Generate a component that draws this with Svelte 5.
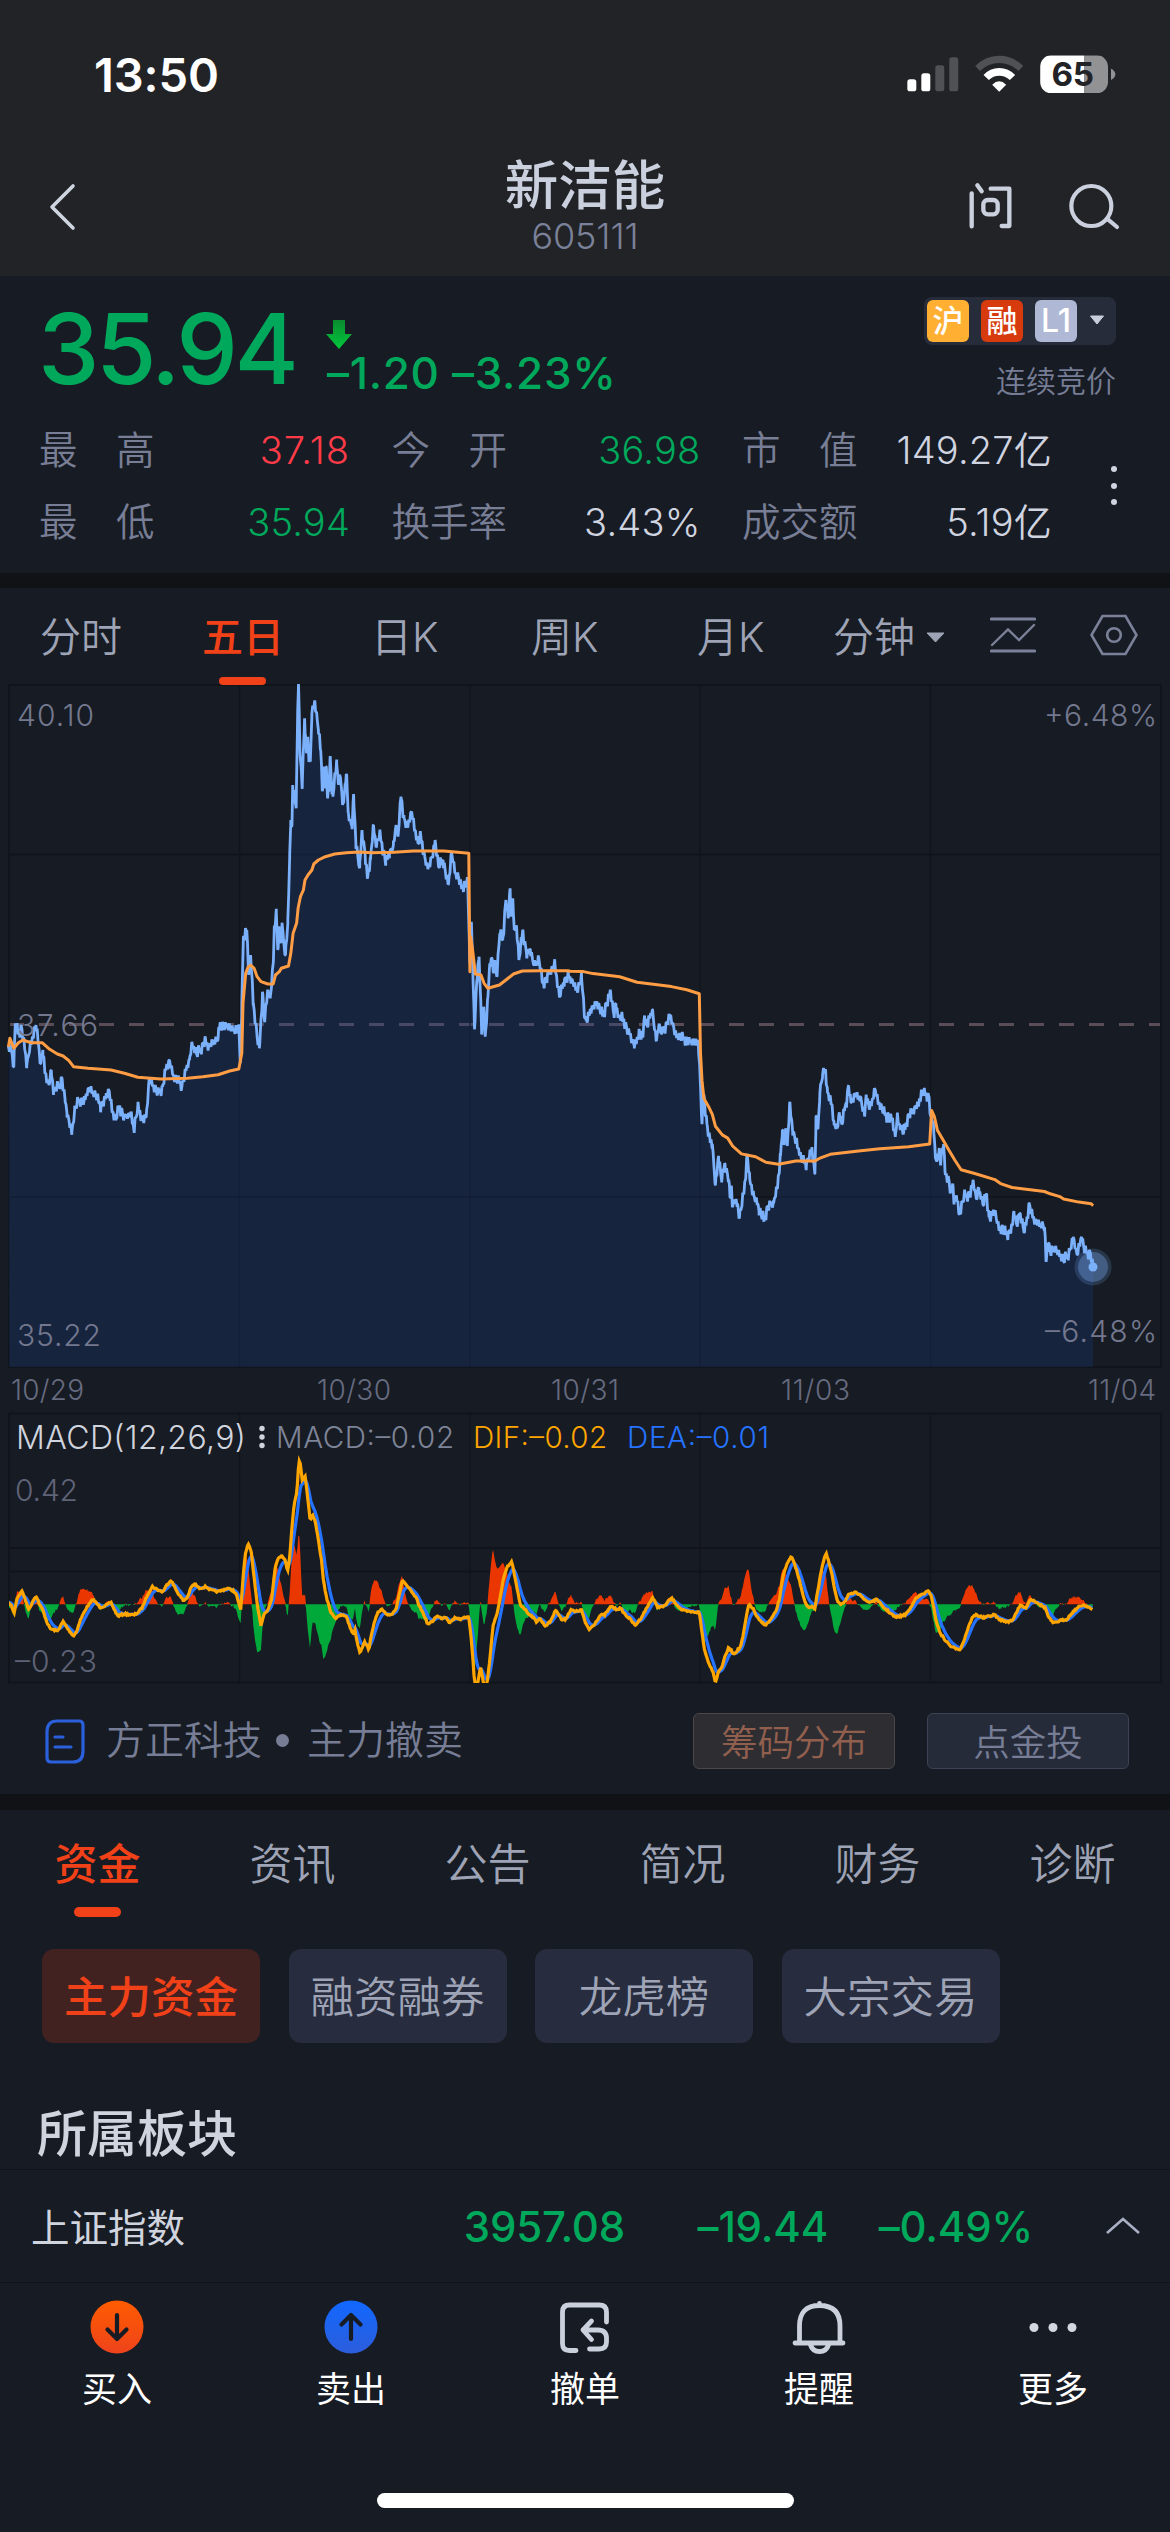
<script>
  const metrics = [
    { label: '最　高', value: '37.18', tone: 'up' },
    { label: '今　开', value: '36.98', tone: 'down' },
    { label: '市　值', value: '149.27亿', tone: '' },
    { label: '最　低', value: '35.94', tone: 'down' },
    { label: '换手率', value: '3.43%', tone: '' },
    { label: '成交额', value: '5.19亿', tone: '' },
  ];
  const sections = ['资金', '资讯', '公告', '简况', '财务', '诊断'];
  const chips = ['主力资金', '融资融券', '龙虎榜', '大宗交易'];

  // Series are stored as flat "x,y" anchor lists; each part has its own origin and vertical scale.
  const SX = 2.6133;
  function decode(text, x0, y0, sy) {
    return text.trim().split(/\s+/).map((p) => {
      const [x, y] = p.split(',').map(Number);
      return [x0 + x / SX, y0 + y / sy];
    });
  }

  const price = [
    ...decode(`22,1130 30,1140 36,1190 40,1060 48,1090 56,1070 62,1110 70,1185 80,1120 94,1065 100,1120 107,1180 112,1140 118,1210 128,1245 134,1200 140,1265 152,1250 162,1225 170,1290 175,1330 188,1385 195,1320 205,1290 220,1290 232,1255 250,1275 262,1305 275,1285 285,1262 294,1325 302,1350 312,1310 325,1340 342,1330 350,1380 360,1310 372,1345 382,1340 390,1225 400,1245 412,1270 425,1250 432,1200 443,1170 455,1225 465,1230 476,1245 485,1200 495,1170 502,1120 515,1155 535,1110 545,1130 570,1105 575,1060 585,1065 600,1070 615,1080 624,1080 628,1180 632,1000 636,800 645,780 650,915 655,855 662,1000 672,1100 678,1135 686,965 691,1050 700,960 706,985 714,880 717,770 722,725 726,840 730,780 734,820 737,758 741,810 746,855 752,760 757,560 760,450 763,465 765,345 768,400 770,360 774,415 778,120 780,42 784,250 790,340 796,145 801,250 804,200 807,265 811,275 815,130 823,95 832,180 838,240 843,360 846,290 850,340 853,290 856,385 860,350 863,258 867,360 870,380 875,310 880,280 884,340 890,325 894,380 898,400 902,340 906,315 910,430 914,450 920,470 924,372 930,520 940,595 946,480 954,550 960,625 968,570 976,465 984,530 992,492 1008,575 1018,550 1028,525 1035,465 1040,500 1048,380 1056,445 1065,470 1076,425 1084,480 1092,520 1100,500 1110,560 1118,595 1130,560 1137,510 1146,590 1158,570 1172,642 1180,545 1190,610 1198,620 1206,655 1222,630 1228,880 1232,755 1240,1078 1246,930 1252,860 1259,1092 1264,1010 1268,1100 1275,980 1280,880 1286,865 1290,910 1293,870 1298,920 1306,790 1314,810 1322,690 1328,745 1333,655 1336,740 1340,685 1344,780 1350,770 1356,870 1366,780 1376,850 1386,840 1396,885 1408,865 1418,938 1430,920 1450,880 1462,980 1475,930 1486,915 1508,960 1520,925 1529,1045`, 0, 670, 3),
    ...decode(`42,558 55,530 70,510 85,545 106,485 115,545 120,515 128,550 140,555 155,590 168,622 180,590 190,600 195,545 200,570 215,530 225,608 232,570 240,590 262,545 275,590 290,600 310,610 335,612 340,700 345,820 350,745 358,820 366,860 372,870 380,975 388,900 396,960 405,920 415,960 418,1005 422,980 425,1030 430,1010 437,1020 443,1055 455,990 463,895 470,960 480,1000 490,1020 494,1040 507,1060 518,1025 532,1020 543,970 550,900 555,835 560,870 564,830 568,875 574,768 582,840 592,865 604,905 618,920 632,880 640,945 643,800 648,830 653,740 660,695 668,683 673,740 678,750 684,770 690,820 698,830 704,790 710,820 718,780 722,765 728,722 734,765 745,745 758,750 770,800 774,745 780,770 788,770 796,730 810,775 825,795 842,805 850,852 855,800 862,825 872,840 885,795 900,780 910,770 920,738 938,750 943,800 950,820 955,905 960,910 965,880 968,915 976,870 980,940 990,960 995,990 1000,970 1003,1015 1010,1000 1018,1048 1030,1000 1045,995 1054,965 1062,1010 1068,980 1080,1025 1088,995 1095,1055 1110,1040 1120,1080 1145,1098 1156,1075 1160,1040 1168,1075 1175,1045 1188,1092 1200,1020 1212,1060 1240,1080 1244,1165 1250,1120 1255,1140 1270,1135 1290,1165 1305,1140 1315,1105 1325,1150 1337,1105 1345,1140 1360,1145 1367,1182`, 570, 800, 2.529),
  ];

  const average = [
    ...decode(`22,1130 26,1105 36,1135 48,1118 60,1110 80,1118 110,1118 130,1138 150,1152 165,1158 180,1172 192,1190 230,1195 290,1200 325,1210 360,1222 420,1227 490,1225 530,1220 570,1214 600,1203 624,1197 632,1150 635,1000 642,910 648,892 655,885 664,895 672,920 682,935 700,942 714,942 720,915 730,905 735,895 754,888 760,850 766,790 775,760 779,715 785,680 793,660 797,630 805,615 815,600 820,582 832,570 850,560 875,552 905,548 940,546 970,548 1030,547 1080,543 1160,543 1225,550 1228,905 1230,800 1236,850 1242,912 1257,915 1265,940 1275,955 1305,945 1322,930 1342,912 1365,903 1410,902 1485,902`, 0, 670, 3),
    ...decode(`0,433 35,434 60,439 130,447 175,461 265,472 305,480 338,490 341,640 345,710 350,755 362,775 372,795 380,825 398,847 412,855 425,875 448,895 485,902 512,916 545,921 590,913 640,913 655,905 680,896 760,887 810,882 885,877 940,870 945,785 952,800 960,835 975,860 990,885 1005,910 1022,935 1060,945 1110,960 1125,970 1155,980 1240,990 1255,996 1280,1003 1290,1009 1330,1017 1362,1021 1367,1026`, 570, 800, 2.529),
  ];

  const difAnchors = [
    ...decode(`22,728 30,738 37,760 44,715 58,692 66,720 76,750 85,725 94,707 104,735 112,750 122,785 131,806 150,813 165,785 178,808 192,828 200,815 210,780 225,745 243,718 262,742 275,738 290,727 300,752 308,768 325,762 350,765 360,758 372,742 385,705 398,680 410,688 425,696 436,675 447,660 458,685 470,708 480,722 490,712 500,680 510,672 520,685 538,680 550,690 570,695 595,685 610,692 618,705 629,752 634,670 640,590 648,552 656,572 664,650 672,730 682,798 690,762 700,750 710,715 720,615 728,595 736,585 744,598 752,633 757,590 763,500 769,430 776,395 781,303 784,305 790,362 797,345 804,410 810,478 817,466 825,490 832,540 840,600 846,670 855,720 864,755 877,775 890,765 905,768 914,800 922,820 928,810 934,850 941,878 952,845 964,868 970,830 978,785 988,758 998,748 1010,765 1025,762 1035,745 1042,710 1052,660 1062,675 1075,695 1088,715 1095,735 1108,765 1118,793 1130,785 1140,768 1155,775 1165,770 1175,788 1190,772 1205,778 1225,768 1231,830 1236,900 1240,968 1248,972 1256,920 1265,980 1273,968 1280,900 1288,800 1298,765 1306,720 1315,660 1325,622 1338,605 1345,650 1352,690 1360,735 1370,745 1380,760 1390,768 1402,785 1410,775 1425,798 1438,785 1453,748 1468,780 1478,778 1492,748 1502,755 1520,750 1530,790`, 0, 1360, 3),
    ...decode(`50,808 62,795 80,765 90,765 108,738 120,748 132,745 145,765 158,778 170,797 185,775 200,745 216,712 228,740 245,740 265,714 280,735 292,750 310,755 338,757 343,800 350,860 358,895 367,920 374,935 380,968 388,935 397,920 405,890 415,862 428,882 445,862 452,830 458,790 463,755 468,733 478,745 488,770 498,785 512,795 525,778 538,755 548,715 556,650 564,620 578,590 588,615 598,655 606,690 615,730 624,745 632,738 640,745 648,690 655,640 663,600 669,580 676,605 684,640 690,680 698,722 708,732 718,725 728,705 745,698 758,702 770,720 782,727 803,718 815,738 830,752 850,772 875,765 888,748 900,720 912,708 936,694 944,705 950,740 958,790 968,820 980,840 998,862 1020,868 1030,840 1040,805 1050,775 1060,764 1080,773 1110,764 1120,778 1145,786 1158,778 1165,760 1178,735 1190,745 1203,718 1218,725 1230,735 1243,745 1250,770 1263,790 1280,782 1298,778 1315,755 1328,742 1340,735 1355,740 1367,752`, 570, 1360, 3),
  ];

  // Resamples anchors at one point per minute bar, with an optional tick jitter.
  function resample(anchors, step, jitter) {
    const out = [];
    let seed = 7;
    let i = 0;
    for (let x = anchors[0][0]; x <= anchors.at(-1)[0]; x += step) {
      while (i < anchors.length - 2 && anchors[i + 1][0] < x) i++;
      const [ax, ay] = anchors[i];
      const [bx, by] = anchors[i + 1];
      const t = Math.min(1, (x - ax) / (bx - ax));
      seed = (seed * 16807) % 2147483647;
      const noise = (seed / 2147483647 - 0.5) * jitter;
      out.push([x, ay + (by - ay) * t + noise]);
    }
    return out;
  }

  const line = (pts) => pts.map(([x, y], i) => `${i ? 'L' : 'M'}${x.toFixed(1)} ${y.toFixed(1)}`).join('');

  // Short wicks go on the resampled points; anchor extremes are kept exact.
  const ticks = resample(price, 0.96, 2).map(([x, y], i) => {
    const wick = [0, 5, -6, 3, -2, 7, -4][i % 7] * (i % 3 === 0 ? 1 : 0.6);
    return [x, Math.max(686, y + wick)];
  });
  const pricePts = [...ticks, ...price].sort((a, b) => a[0] - b[0]);
  const pricePath = line(pricePts);
  const priceArea = `${pricePath}L1093 1367L9 1367Z`;
  const avgPath = line(average);

  const ZERO = 1604.3;
  const dif = resample(difAnchors, 0.96, 1.6);
  let ema = dif[0][1];
  const dea = dif.map(([x, y]) => {
    ema += (y - ema) * 0.2;
    return [x, ema];
  });
  const hist = dif.map(([x, y], i) => [x, ZERO + 2 * (y - dea[i][1])]);
  const area = (pts) => `M9 ${ZERO}${line(pts).replace('M', 'L')}L1093 ${ZERO}Z`;
  const redArea = area(hist.map(([x, y]) => [x, Math.min(y, ZERO)]));
  const greenArea = area(hist.map(([x, y]) => [x, Math.max(y, ZERO)]));
  const days = [239.5, 470, 700, 930.5];
</script>

<div class="screen">
  <header>
    <div class="status">
      <span class="clock">13:50</span>
      <svg class="sys" viewBox="80 44 628 116">
        <g fill="#fff">
          <rect x="81" y="117" width="27" height="36" rx="8" />
          <rect x="123" y="99" width="27" height="54" rx="8" />
        </g>
        <g fill="#505155">
          <rect x="165" y="75" width="27" height="78" rx="8" />
          <rect x="207" y="51" width="27" height="102" rx="8" />
          <path d="M285 77Q316 46 357 46Q398 46 429 77L415 92Q390 68 357 68Q324 68 299 92Z" />
        </g>
        <path fill="#fff" d="M310 104Q329 83 357 83Q385 83 405 104L389 119Q375 106 357 106Q339 106 326 119Z" />
        <path fill="#fff" d="M336 133Q357 112 378 133L357 154Z" />
        <clipPath id="cell"><rect x="480" y="45" width="204" height="114" rx="34" /></clipPath>
        <g clip-path="url(#cell)">
          <rect x="480" y="45" width="132" height="114" fill="#fff" />
          <rect x="612" y="45" width="72" height="114" fill="#929294" />
        </g>
        <path d="M693 85Q706 91 706 102Q706 113 693 119Z" fill="#929294" />
        <text x="578" y="137" class="pct" text-anchor="middle" textLength="128">65</text>
      </svg>
    </div>
    <div class="nav">
      <svg class="back" viewBox="0 0 32 50"><path d="M25 4L4 25L25 46" /></svg>
      <div class="title">
        <h1>新洁能</h1>
        <span>605111</span>
      </div>
      <div class="tools">
        <svg class="ask" viewBox="260 425 140 150">
          <path d="M274 462V561M291 438L304 456M331 448H387V560H364" />
          <rect x="309" y="482" width="43" height="43" rx="13" />
        </svg>
        <svg class="find" viewBox="560 420 165 155">
          <circle cx="633" cy="495" r="60" /><path d="M680 533L710 558" />
        </svg>
      </div>
    </div>
  </header>

  <section class="quote">
    <div class="headline">
      <strong>35.94</strong>
      <div class="change">
        <svg viewBox="0 0 28 36">
          <defs><linearGradient id="fall" x2="0" y2="1"><stop offset="0" stop-color="#0b8a2f" /><stop offset="1" stop-color="#00c83c" /></linearGradient></defs>
          <path d="M8 4H20V18H27L14 33L1 18H8Z" fill="url(#fall)" />
        </svg>
        <span>–1.20 –3.23%</span>
      </div>
      <div class="flags">
        <div class="badges">
          <i class="hu">沪</i><i class="rong">融</i><i class="lv">L1</i>
          <svg viewBox="0 0 16 10"><path d="M1.5 1H14.5L8 9Z" fill="#c9cedb" stroke="#c9cedb" stroke-linejoin="round" /></svg>
        </div>
        <span>连续竞价</span>
      </div>
    </div>
    <div class="figures">
      <div class="metrics">
        {#each metrics as m}
          <div class="metric"><span>{m.label}</span><b class={m.tone}>{m.value}</b></div>
        {/each}
      </div>
      <div class="kebab"><i></i><i></i><i></i></div>
    </div>
  </section>

  <div class="band"></div>

  <nav class="periods">
    <span class="p1">分时</span>
    <span class="p2 on">五日</span>
    <span class="p3">日K</span>
    <span class="p4">周K</span>
    <span class="p5">月K</span>
    <span class="p6">分钟<svg viewBox="0 0 19 11"><path d="M1 1H18L9.5 10Z" fill="#9ea4b6" stroke="#9ea4b6" stroke-linejoin="round" /></svg></span>
    <svg class="trend" viewBox="0 0 46 36">
      <path d="M1.5 2H44.500M1.500 34H44.500" stroke-width="3.200" /><path d="M2 28L18 12.500L29 23L44 8" stroke-width="2.400" />
    </svg>
    <svg class="gear" viewBox="0 0 48 42">
      <path d="M12.500 2H35.500L46.500 21L35.500 40H12.500L1.500 21Z" /><circle cx="24" cy="21" r="6.800" />
    </svg>
  </nav>

  <svg class="chart" viewBox="0 684 1170 1001">
    <clipPath id="macd"><rect x="9" y="1413" width="1152" height="270" /></clipPath>
    <path class="mid" d="M9 1024.500H1161" />
    <g class="grid">
      <path d="M9 685H1161V1367H9ZM9 854.500H1161M9 1197H1161" />
      <path d="M9 1413.500H1161M9 1548H1161M9 1571.500H1161M9 1413V1682.500H1161V1413" />
      {#each days as x}
        <path class="thin" d="M{x} 684V1367M{x} 1413V1683" />
      {/each}
    </g>
    <path d={priceArea} fill="#173f8f" fill-opacity=".25" />
    <path d={pricePath} fill="none" stroke="#7bb0fb" stroke-width="2.800" stroke-linejoin="bevel" />
    <path d={avgPath} fill="none" stroke="#ff9d45" stroke-width="3" stroke-linejoin="round" />
    <circle cx="1093" cy="1267" r="18.500" fill="#7bb0fb" fill-opacity=".18" />
    <circle cx="1093" cy="1267" r="15" fill="#7bb0fb" fill-opacity=".32" />
    <circle cx="1093" cy="1267" r="4.500" fill="#7bb0fb" />

    <g class="axis">
      <text x="17" y="726" textLength="77">40.10</text>
      <text x="17" y="1036" textLength="81">37.66</text>
      <text x="17" y="1346" textLength="84">35.22</text>
      <text x="1157" y="726" text-anchor="end" textLength="113">+6.48%</text>
      <text x="1157" y="1342" text-anchor="end" textLength="112">–6.48%</text>
      <g class="dates">
        <text x="11" y="1400" textLength="73">10/29</text>
        <text x="317" y="1400" textLength="74">10/30</text>
        <text x="551" y="1400" textLength="68">10/31</text>
        <text x="781" y="1400" textLength="69">11/03</text>
        <text x="1156" y="1400" text-anchor="end" textLength="68">11/04</text>
        <text x="15" y="1500.500" class="lvl" textLength="63">0.42</text>
        <text x="15" y="1671.500" class="lvl" textLength="82">–0.23</text>
      </g>
    </g>

    <g class="legend">
      <text x="16" y="1448.500" class="name" textLength="230">MACD(12,26,9)</text>
      <g fill="#d0d4df"><circle cx="262" cy="1428.500" r="2.700" /><circle cx="262" cy="1437" r="2.700" /><circle cx="262" cy="1445.500" r="2.700" /></g>
      <text x="276" y="1448" fill="#7e8498" textLength="178">MACD:–0.02</text>
      <text x="473" y="1448" fill="#ffa500" textLength="134">DIF:–0.02</text>
      <text x="627" y="1448" fill="#2573ff" textLength="142">DEA:–0.01</text>
    </g>
    <g clip-path="url(#macd)">
      <path d={redArea} fill="#ea3600" />
      <path d={greenArea} fill="#00a93a" />
      <path d={line(dea)} fill="none" stroke="#2573ff" stroke-width="3.200" />
      <path d={line(dif)} fill="none" stroke="#ffa500" stroke-width="3.200" />
    </g>
  </svg>

  <div class="news">
    <svg viewBox="0 0 40 46">
      <path d="M12 2H34Q38 2 38 6V32Q38 43 28 43H6Q2 43 2 39V13Q2 2 12 2Z" /><path d="M10 18H18M10 28H26" />
    </svg>
    <p>方正科技<em></em>主力撤卖</p>
    <button class="warm">筹码分布</button>
    <button>点金投</button>
  </div>

  <div class="band wide"></div>

  <nav class="sections">
    {#each sections as s, i}
      <span class:on={i === 0}>{s}</span>
    {/each}
  </nav>
  <div class="chips">
    {#each chips as c, i}
      <span class:on={i === 0}>{c}</span>
    {/each}
  </div>
  <h2>所属板块</h2>

  <div class="index">
    <span class="iname">上证指数</span>
    <span class="ival">3957.08</span>
    <span class="ichg">–19.44</span>
    <span class="ipct">–0.49%</span>
    <svg viewBox="0 0 38 20"><path d="M3 17L19 3L35 17" /></svg>
  </div>

  <footer>
    <div>
      <svg viewBox="0 0 54 54">
        <defs><linearGradient id="buy" x2="0" y2="1"><stop offset="0" stop-color="#ff5c00" /><stop offset="1" stop-color="#ee431c" /></linearGradient></defs>
        <circle cx="27" cy="27" r="26.500" fill="url(#buy)" /><path class="dark" d="M27 15V39M17.500 29.500L27 39L36.500 29.500" />
      </svg>
      <span>买入</span>
    </div>
    <div>
      <svg viewBox="0 0 54 54">
        <defs><linearGradient id="sell" x2="0" y2="1"><stop offset="0" stop-color="#1168ff" /><stop offset="1" stop-color="#2c5ddb" /></linearGradient></defs>
        <circle cx="27" cy="27" r="26.500" fill="url(#sell)" /><path class="dark" d="M27 39V15M17.500 24.500L27 15L36.500 24.500" />
      </svg>
      <span>卖出</span>
    </div>
    <div>
      <svg viewBox="0 0 54 54">
        <path class="pale" d="M18 50.500H11.500Q4.500 50.500 4.500 43.500V12Q4.500 5 11.500 5H41Q48.500 5 48.500 12V22M31.500 49H41Q48.500 49 48.500 42V38Q48.500 30 40 30H25M33.500 21L25 30L33.500 39.500" />
      </svg>
      <span>撤单</span>
    </div>
    <div>
      <svg viewBox="0 0 54 54">
        <path class="pale" d="M3 43H51M7.500 42V26Q7.500 5.500 27.500 5.500Q48 5.500 48 26V42M18.500 45Q20.500 51.500 27.500 51.500Q34.500 51.500 36.500 45M27.500 3.500V5" />
      </svg>
      <span>提醒</span>
    </div>
    <div>
      <svg viewBox="0 0 54 54"><g fill="#d3d7e2"><circle cx="8" cy="27.500" r="4.500" /><circle cx="27" cy="27.500" r="4.500" /><circle cx="46" cy="27.500" r="4.500" /></g></svg>
      <span>更多</span>
    </div>
  </footer>
  <div class="home"></div>
</div>

<style>
  :global(body) { background: #171b23; }
  .screen {
    width: 1170px; height: 2532px; overflow: hidden; background: #171b23;
    display: flex; flex-direction: column;
    font-family: Inter, 'Noto Sans CJK SC', sans-serif;
    color: #cfd4e0;
  }
  .screen > * { flex: none; }
  svg { display: block; flex: none; fill: none; }
  h1, h2, p { margin: 0; font-weight: inherit; }
  i, em { font-style: normal; }
  span, strong, b { white-space: nowrap; }

  header { height: 276px; background: #222326; }
  .status { height: 150px; display: flex; justify-content: space-between; padding: 0 54px 0 94px; box-sizing: border-box; }
  .clock { font-size: 47px; font-weight: 600; line-height: 149px; color: #fff; letter-spacing: -0.1px; }
  .sys { width: 209px; height: 38.700px; margin-top: 54.500px; }
  .pct { font: 700 100px Inter, sans-serif; fill: #222326; }
  .nav { height: 126px; display: grid; grid-template-columns: 1fr 300px 1fr; }
  .back { width: 32px; height: 50px; margin: 32px 0 0 48px; stroke: #cfd5e0; stroke-width: 3.600; stroke-linecap: round; stroke-linejoin: round; }
  .title { text-align: center; display: flex; flex-direction: column; align-items: center; }
  .title h1 { font-size: 53.500px; line-height: 60px; font-weight: 500; color: #cad0dd; margin-top: 6px; }
  .title span { font-size: 36px; line-height: 40px; font-weight: 300; color: #7a8199; letter-spacing: -0.1px; }
  .tools { display: flex; justify-content: flex-end; gap: 53px; padding: 31px 48px 0 0; stroke: #cad0dd; stroke-linecap: round; stroke-linejoin: round; }
  .ask { width: 46.700px; height: 50px; stroke-width: 13; }
  .find { width: 55px; height: 51.700px; stroke-width: 12.500; }

  .quote { height: 297px; }
  .headline { height: 136px; display: flex; padding: 0 54px 0 38px; }
  .headline strong { font-size: 98px; line-height: 146px; font-weight: 500; color: #00a85c; letter-spacing: -3.400px; width: 287px; }
  .change { padding-top: 40px; color: #00a85c; font-size: 44px; line-height: 52px; font-weight: 500; letter-spacing: 0.7px; }
  .change svg { width: 28px; height: 36px; }
  .change span { display: block; margin: -5px 0 0 2px; }
  .flags { margin-left: auto; padding-top: 21px; display: flex; flex-direction: column; align-items: flex-end; }
  .badges { height: 48px; width: 192px; border-radius: 8px; background: #272c3b; display: flex; align-items: center; gap: 12px; padding-left: 3px; box-sizing: border-box; }
  .badges i { width: 42px; height: 42px; border-radius: 6px; text-align: center; font-size: 31px; line-height: 41px; color: #fff; font-weight: 500; }
  .hu { background: #ffaf32; }
  .rong { background: #d63a0d; }
  .badges .lv { background: #afb8d4; font-size: 32px; font-weight: 500; }
  .badges svg { width: 16px; height: 10px; margin-top: -3px; }
  .flags > span { font-size: 30px; line-height: 40px; margin-top: 16px; font-weight: 350; color: #767d95; }
  .figures { display: flex; height: 150px; padding: 0 54px 0 39px; }
  .metrics { width: 1013px; display: grid; grid-template-columns: 311px 309px 310px; column-gap: 41.500px; grid-template-rows: 72px 72px; padding-top: 2px; }
  .metric { display: flex; justify-content: space-between; line-height: 72px; font-size: 38.500px; font-weight: 350; color: #777e95; }
  .metric b { font-weight: 350; color: #cfd4e0; font-size: 38px; letter-spacing: 0.200px; }
  .metric b.up { color: #ff3b49; letter-spacing: 1px; }
  .metric b.down { color: #00a85c; }
  .kebab { margin-left: auto; margin-right: -1.500px; width: 7px; display: flex; flex-direction: column; gap: 10.500px; padding-top: 54px; }
  .kebab i { width: 6px; height: 6px; border-radius: 3px; background: #cfd4e0; }

  .band { height: 15px; background: #101216; }
  .band.wide { height: 16px; }

  .periods { height: 96px; display: grid; grid-template-columns: 162px 169px 160px 166px 136px 157px 100px 1fr; padding-left: 40px; font-size: 41px; line-height: 98px; font-weight: 350; color: #9ea4b6; }
  .periods .on { color: #f04118; font-weight: 500; position: relative; }
  .periods .on::after { content: ''; position: absolute; left: 17px; bottom: 1px; width: 47px; height: 8.500px; border-radius: 4px; background: #f04118; }
  .p6 { display: flex; align-items: center; gap: 11px; }
  .p6 svg { width: 19px; height: 11px; }
  .trend { width: 46px; height: 36px; margin-top: 29px; stroke: #7a8199; stroke-linecap: round; }
  .gear { width: 48px; height: 42px; margin-top: 26px; stroke: #7a8199; stroke-width: 2.600; }

  .chart { width: 1170px; height: 1001px; }
  .mid { stroke: #5a4d57; stroke-width: 3; stroke-dasharray: 15 15; }
  .grid { stroke: #11141a; stroke-width: 2; fill: none; }
  .grid .thin { stroke-width: 1.200; }
  .axis text { font: 300 30px Inter, sans-serif; fill: #73788f; }
  .axis .dates text { font-size: 28px; fill: #666b80; }
  .axis .dates .lvl { font-size: 30px; fill: #5f6377; }
  .legend text { font: 350 29.500px Inter, sans-serif; }
  .legend .name { font-size: 32px; fill: #d0d4df; }

  .news { height: 109px; display: flex; padding: 0 41px 0 45px; align-items: flex-start; }
  .news svg { width: 40px; height: 46px; margin-top: 33.500px; stroke: #2b60dc; stroke-width: 3.200; stroke-linecap: round; stroke-linejoin: round; }
  .news p { display: flex; align-items: center; margin: 26px auto 0 21px; font-size: 39px; line-height: 58px; font-weight: 350; color: #767d95; }
  .news em { width: 13px; height: 13px; border-radius: 50%; background: #767d95; margin: 0 18px 0 14px; }
  button { width: 202px; height: 56px; margin: 28px 0 0; padding: 0 0 1px; border: 1.500px solid #3d4254; border-radius: 6px; background: #262b3a; color: #767d95; font: 350 36.500px 'Noto Sans CJK SC', sans-serif; line-height: 50px; }
  button.warm { background: #2d2d32; border-color: #4a484a; color: #915f4e; margin-right: 32px; }

  .sections { height: 139px; display: grid; grid-template-columns: repeat(6, 195px); text-align: center; font-size: 43px; line-height: 109px; font-weight: 350; color: #9ea4b6; }
  .sections .on { color: #f04118; font-weight: 500; display: flex; flex-direction: column; align-items: center; }
  .sections .on::after { content: ''; width: 47px; height: 10px; margin-top: -12px; border-radius: 5px; background: #f04118; }
  .chips { display: flex; gap: 28.500px; padding-left: 42px; }
  .chips span { width: 218px; height: 94px; border-radius: 12px; background: #272c3e; text-align: center; font-size: 43.500px; line-height: 96px; color: #9ea4b6; font-weight: 350; }
  .chips .on { background: #422221; color: #f04118; font-weight: 500; }
  h2 { height: 126px; padding-left: 37px; font-size: 50px; font-weight: 500; line-height: 183px; color: #d0d4df; }
  .index { height: 114px; box-sizing: border-box; border-top: 1.500px solid #101319; border-bottom: 1.500px solid #101319; display: grid; grid-template-columns: 392px 202px 203px 205px 38px; justify-content: start; padding: 0 0 0 31px; align-items: center; font-size: 38.500px; color: #d0d4df; }
  .index .iname { margin-top: -3px; }
  .index .ival, .index .ichg, .index .ipct { font-size: 42px; font-weight: 500; color: #00a85c; text-align: right; letter-spacing: -0.200px; }
  .index svg { width: 38px; height: 20px; margin-left: 71px; stroke: #a9afc4; stroke-width: 2.600; }

  footer { display: grid; grid-template-columns: repeat(5, 234px); height: 210px; }
  footer div { display: flex; flex-direction: column; align-items: center; padding-top: 17px; }
  footer svg { width: 54px; height: 54px; }
  footer span { font-size: 35px; line-height: 50px; margin-top: 10px; color: #fff; }
  .dark { stroke: #171b23; stroke-width: 4.200; stroke-linecap: round; stroke-linejoin: round; }
  .pale { stroke: #cbd0dd; stroke-width: 4.800; stroke-linecap: round; stroke-linejoin: round; }
  .home { width: 417px; height: 15px; border-radius: 8px; background: #fff; margin: 0 auto; }
</style>
